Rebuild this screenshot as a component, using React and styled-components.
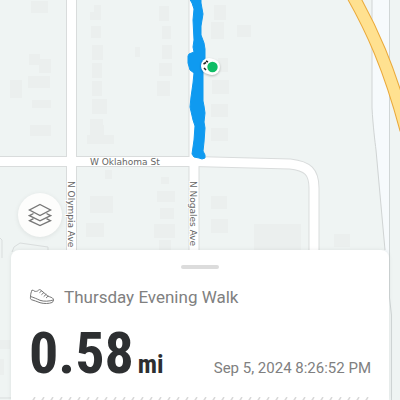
import styled, { createGlobalStyle } from "styled-components";

const BUILDINGS = [
  [31, 1, 17, 12], [94, 5, 7, 15], [90, 12, 10, 8], [91, 26, 10, 12], [92, 45, 11, 15],
  [92, 63, 10, 15], [92, 81, 10, 15], [92, 99, 15, 15], [90, 119, 13, 14], [29, 54, 11, 11],
  [39, 59, 12, 14], [28, 76, 22, 12], [10, 80, 12, 18], [32, 100, 19, 8], [30, 125, 21, 11],
  [159, 6, 10, 15], [162, 26, 9, 13], [162, 45, 10, 14], [159, 63, 13, 13], [157, 81, 13, 15],
  [135, 47, 5, 10], [214, 5, 12, 15], [211, 22, 13, 17], [237, 25, 14, 12], [218, 58, 10, 14],
  [212, 80, 17, 14], [211, 104, 17, 13], [211, 128, 17, 13], [90, 125, 14, 14], [87, 135, 27, 9],
  [105, 170, 7, 9], [90, 196, 23, 17], [86, 223, 18, 14], [161, 177, 8, 7], [157, 191, 18, 11],
  [160, 208, 14, 11], [154, 224, 21, 14], [159, 240, 12, 12], [211, 196, 16, 13], [211, 219, 17, 14],
  [254, 224, 47, 30], [334, 234, 16, 13], [0, 340, 10, 9], [0, 359, 4, 16],
];

const ROADS = [
  "M71.500 -10V420",
  "M194 -10V420",
  "M-10 161.500H194L290 164C308 166 314 172 314 188V420",
];

const HIGHWAY = "M347 -14C372 28 390 70 406 130";

function Map() {
  return (
    <MapCanvas viewBox="0 0 400 400" preserveAspectRatio="xMidYMid slice" aria-label="Route map">
      <rect width="400" height="400" fill="#eff4f3" />
      <path d="M372 0V108C373 126 375 142 376 150L385 250L390 306V0Z" fill="#f6fafc" />
      <path d="M372 0V108C373 126 375 142 376 150L385 250" fill="none" stroke="#d0d4d4" />
      <path d="M389.500 0V298L391.500 315V400" fill="none" stroke="#d0d6d6" />
      {BUILDINGS.map(([x, y, width, height]) => (
        <rect key={`${x}-${y}`} x={x} y={y} width={width} height={height} fill="#ebefee" />
      ))}
      <path d="M12 252L14 247L20 243L48 247V252M0 238L2 240V258M0 398H12" fill="none" stroke="#d9dddd" />
      {ROADS.map((d) => (
        <path key={d} d={d} fill="none" stroke="#d9dcdc" strokeWidth="11" />
      ))}
      {ROADS.map((d) => (
        <path key={d} d={d} fill="none" stroke="#fff" strokeWidth="9" />
      ))}
      <path d={HIGHWAY} fill="none" stroke="#eaa93a" strokeWidth="13" />
      <path d={HIGHWAY} fill="none" stroke="#ffe190" strokeWidth="11" />
      <MapLabel x="90" y="165">W Oklahoma St</MapLabel>
      <MapLabel transform="translate(68 181) rotate(90)">N Olympia Ave</MapLabel>
      <MapLabel transform="translate(190 181) rotate(90)">N Nogales Ave</MapLabel>
      <path
        d="M189 -2L192 3L194 9L193 20L194 40L193 47L194 52L189 54L188 56V63L190 70L194 73L193 83L191 97L190 107L193 120L195 126L194 140L192 154L194 157L199 158L202 159L205 158V155L203 151L204 142L205 128L204 122L205 113L204 106L203 101V72L205 58V49L204 43L201 35L201 26L203 14L201 3L201 -2Z"
        fill="#0f9af0"
        stroke="#0f9af0"
        strokeLinejoin="round"
      />
      <g filter="drop-shadow(0 1px 1px rgba(0, 0, 0, 0.25))">
        <circle cx="209" cy="66" r="8" fill="#fff" />
        <circle cx="212" cy="67" r="8" fill="#fff" />
      </g>
      <path d="M206 61L208 62M203.500 64L206 62.500M204 68L206 70" stroke="#222" strokeWidth="1.500" />
      <circle cx="212.500" cy="67" r="5.200" fill="#0fbd66" />
    </MapCanvas>
  );
}

function LayersIcon() {
  return (
    <svg width="24" height="24" viewBox="0 0 24 24" fill="none" stroke="#777" strokeWidth="1.400" strokeLinejoin="miter">
      <path d="M12 1.500L22.500 7L12 12.500L1.500 7Z" />
      <path d="M5.500 10.500L1.500 12.600L12 17.800L22.500 12.600L18.500 10.500" />
      <path d="M5.500 15.600L1.500 17.700L12 22.600L22.500 17.700L18.500 15.600" />
    </svg>
  );
}

function ShoeIcon() {
  return (
    <svg width="26" height="18" viewBox="0 0 26 18" fill="none" stroke="#777" strokeLinecap="round" strokeLinejoin="round">
      <path d="M3 2.500C2 4 1.700 6 1.500 8.500C1.300 10.500 1.400 11.300 2.500 11.700C5 12.500 8 13.500 11 14.700C15 15.900 20 15.700 23 14.500C24.500 13.700 24.800 12 24.200 10.800C23.500 9.500 21 9 19 8.200L12.500 2.700C11.500 1.700 10.500 1.300 9.700 2C8.800 3.400 6.500 3.800 5 3C4.500 2.500 4 1.500 3 2.500Z" />
      <path d="M1.500 8.500C5 9.500 8 11 11 12.300C15 13.700 20 13.400 24.300 12" />
      <path d="M12.500 3L10.700 4.500M14.700 4.700L12.700 6.500M17 6.500L15 8.300M19 8.200L17.300 9.800" />
    </svg>
  );
}

function Divider() {
  return (
    <Hatching aria-hidden="true">
      <defs>
        <pattern id="hatch" width="9" height="8" patternUnits="userSpaceOnUse">
          <path d="M3 5L6 0" stroke="#d8d8d8" strokeWidth="1.500" />
        </pattern>
      </defs>
      <rect width="100%" height="6" fill="url(#hatch)" />
    </Hatching>
  );
}

function App() {
  return (
    <Screen>
      <GlobalStyle />
      <Map />
      <Controls>
        <LayersButton type="button" aria-label="Map layers">
          <LayersIcon />
        </LayersButton>
      </Controls>
      <Sheet>
        <Handle />
        <TitleRow>
          <ShoeIcon />
          <Title>Thursday Evening Walk</Title>
        </TitleRow>
        <StatsRow>
          <Distance>
            0.58<Unit>mi</Unit>
          </Distance>
          <Timestamp>Sep 5, 2024 8:26:52 PM</Timestamp>
        </StatsRow>
        <Divider />
      </Sheet>
    </Screen>
  );
}

export default App;

const GlobalStyle = createGlobalStyle`
  * {
    box-sizing: border-box;
  }

  body {
    margin: 0;
    font-family: Roboto, "Liberation Sans", sans-serif;
    background-color: #eff4f3;
  }
`;

const Screen = styled.main`
  position: relative;
  display: flex;
  flex-direction: column;
  justify-content: flex-end;
  min-height: 100vh;
  overflow: hidden;
`;

const MapCanvas = styled.svg`
  position: absolute;
  inset: 0;
  width: 100%;
  height: 100%;
`;

const MapLabel = styled.text`
  font-family: "DejaVu Sans", sans-serif;
  font-size: 9px;
  fill: #666;
  stroke: #fff;
  stroke-width: 2px;
  paint-order: stroke;
`;

const Controls = styled.div`
  position: relative;
  display: flex;
  padding: 0 18px 13px;
`;

const LayersButton = styled.button`
  display: flex;
  align-items: center;
  justify-content: center;
  width: 44px;
  height: 44px;
  padding: 0;
  border: none;
  border-radius: 50%;
  background-color: #fdfdfc;
  box-shadow: 0 1px 5px rgba(0, 0, 0, 0.08);
  cursor: pointer;
`;

const Sheet = styled.section`
  position: relative;
  display: flex;
  flex-direction: column;
  margin: 0 11px;
  padding: 15px 18px 0;
  border-radius: 8px 8px 0 0;
  background-color: #fff;
  box-shadow: 0 0 4px rgba(0, 0, 0, 0.08);
`;

const Handle = styled.div`
  align-self: center;
  width: 38px;
  height: 4px;
  border-radius: 2px;
  background-color: #dcdcdc;
`;

const TitleRow = styled.div`
  display: flex;
  align-items: center;
  gap: 9px;
  margin-top: 16px;
`;

const Title = styled.h1`
  margin: 0;
  font-size: 17px;
  line-height: 24px;
  font-weight: 400;
  color: #808080;
`;

const StatsRow = styled.div`
  display: flex;
  align-items: baseline;
  justify-content: space-between;
  height: 88px;
`;

const Distance = styled.div`
  font-family: "Roboto Condensed", "Liberation Sans Narrow", sans-serif;
  font-size: 58px;
  line-height: 88px;
  font-weight: 700;
  color: #2d2f31;
  white-space: nowrap;
`;

const Unit = styled.span`
  margin-left: 4px;
  font-size: 26px;
`;

const Timestamp = styled.time`
  font-size: 15px;
  line-height: 20px;
  color: #808080;
  white-space: nowrap;
`;

const Hatching = styled.svg`
  display: block;
  width: 100%;
  height: 3px;
`;
